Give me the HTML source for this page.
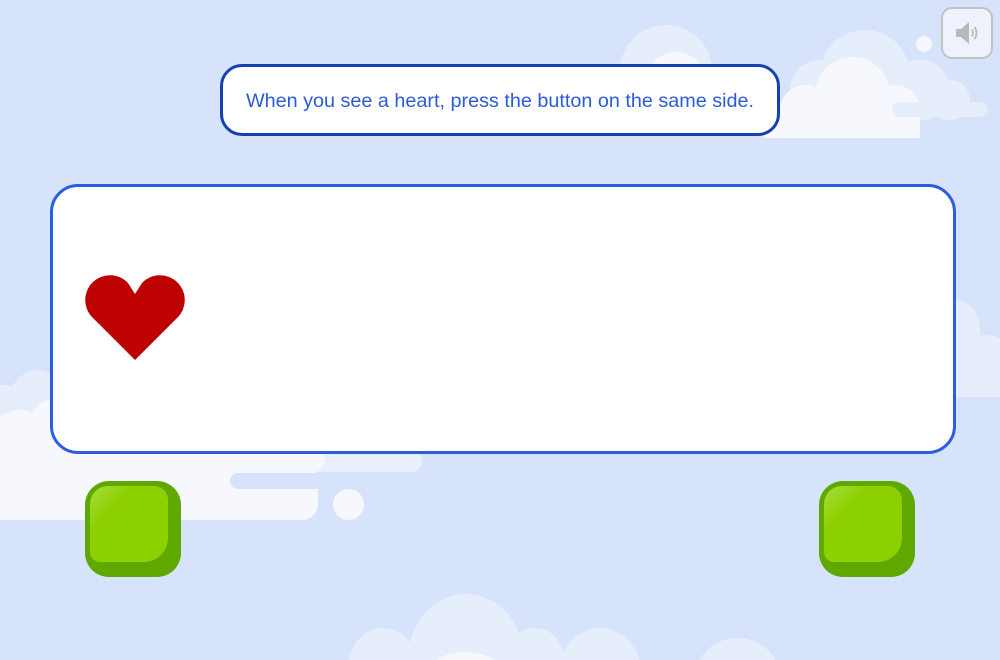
<!DOCTYPE html>
<html style="margin:0;width:1000px;height:660px;overflow:hidden"><head><meta charset="utf-8"><style>
body{margin:0;width:1000px;height:660px;overflow:hidden;background:#d7e3fb;font-family:"Liberation Sans",sans-serif}
#r{position:relative;width:1000px;height:660px;overflow:hidden}
.a{position:absolute}
.c{position:absolute;border-radius:50%}
.l{background:#e6eefc}.w{background:#f6f8fe}
.pill{position:absolute;border-radius:20px;background:#f6f8fe}
</style></head><body><div id="r">
<div class="c l" style="left:620px;top:25px;width:92px;height:92px"></div>
<div class="c w" style="left:645px;top:52px;width:62px;height:62px"></div>
<div class="c l" style="left:820px;top:30px;width:90px;height:90px"></div>
<div class="c l" style="left:790px;top:60px;width:60px;height:60px"></div>
<div class="c l" style="left:890px;top:60px;width:60px;height:60px"></div>
<div class="c l" style="left:930px;top:80px;width:40px;height:40px"></div>
<div class="c w" style="left:815px;top:57px;width:75px;height:75px"></div>
<div class="c w" style="left:780px;top:85px;width:50px;height:50px"></div>
<div class="c w" style="left:870px;top:85px;width:50px;height:50px"></div>
<div class="a w" style="left:770px;top:108px;width:150px;height:30px"></div>
<div class="pill" style="left:892px;top:102px;width:95px;height:15px;background:#e6eefc"></div>
<div class="pill" style="left:760px;top:124px;width:156px;height:14px"></div>
<div class="c w" style="left:916px;top:36px;width:16px;height:16px"></div>
<div class="c l" style="left:930px;top:300px;width:50px;height:60px"></div>
<div class="c l" style="left:955px;top:335px;width:60px;height:60px"></div>
<div class="a l" style="left:955px;top:360px;width:45px;height:37px"></div>
<div class="c l" style="left:8px;top:370px;width:60px;height:70px"></div>
<div class="c l" style="left:-20px;top:385px;width:50px;height:60px"></div>
<div class="c w" style="left:-10px;top:410px;width:60px;height:60px"></div>
<div class="c w" style="left:30px;top:400px;width:40px;height:50px"></div>
<div class="pill" style="left:230px;top:450px;width:192px;height:22px;background:#e9f0fd"></div>
<div class="a w" style="left:0;top:440px;width:325px;height:32px;border-radius:0 12px 12px 0"></div>
<div class="a w" style="left:0;top:465px;width:318px;height:55px;border-radius:0 16px 16px 0"></div>
<div class="a" style="left:230px;top:473px;width:120px;height:16px;background:#d7e3fb;border-radius:8px"></div>
<div class="c w" style="left:333px;top:489px;width:31px;height:31px"></div>
<div class="c l" style="left:348px;top:628px;width:70px;height:80px"></div>
<div class="c l" style="left:408px;top:594px;width:116px;height:130px"></div>
<div class="c l" style="left:505px;top:628px;width:60px;height:70px"></div>
<div class="c l" style="left:560px;top:628px;width:80px;height:80px"></div>
<div class="c l" style="left:695px;top:638px;width:85px;height:80px"></div>
<div class="c w" style="left:422px;top:652px;width:86px;height:60px"></div>
<div class="a" style="left:941px;top:7px;width:48px;height:48px;border:2px solid #c2c2c2;border-radius:11px;background:#eef2fc">
<svg width="48" height="48" viewBox="0 0 48 48"><path d="M13 20h5l8-7v22l-8-7h-5z" fill="#b9b9b9"/><path d="M29 20.5q2 3.5 0 7M31.5 18q4 6 0 12" stroke="#b9b9b9" stroke-width="1.8" fill="none"/></svg></div>
<div class="a" style="left:220px;top:64px;width:554px;height:66px;border:3px solid #1640b0;border-radius:22px;background:#fff;color:#2b5bd9;font-size:19.8px;line-height:68px;text-align:center;white-space:nowrap">When you see a heart, press the button on the same side.</div>
<div class="a" style="left:50px;top:184px;width:900px;height:264px;border:3px solid #2a5de0;border-radius:28px;background:#fff"></div>
<svg class="a" style="left:0;top:0" width="1000" height="660"><path d="M135,360 L92,317 A24.5,24.5 0 0 1 128,283 L135,294 L142,283 A24.5,24.5 0 0 1 178,317 Z" fill="#bd0000"/></svg>
<div class="a" style="left:85px;top:481px;width:96px;height:96px;border-radius:24px;background:#5ea800">
<div class="a" style="left:5px;top:5px;width:78px;height:76px;border-radius:18px 14px 24px 10px;background:linear-gradient(135deg,#a6dd3c,#8cd000 30%);"></div></div>
<div class="a" style="left:819px;top:481px;width:96px;height:96px;border-radius:24px;background:#5ea800">
<div class="a" style="left:5px;top:5px;width:78px;height:76px;border-radius:18px 14px 24px 10px;background:linear-gradient(135deg,#a6dd3c,#8cd000 30%);"></div></div>
</div></body></html>
